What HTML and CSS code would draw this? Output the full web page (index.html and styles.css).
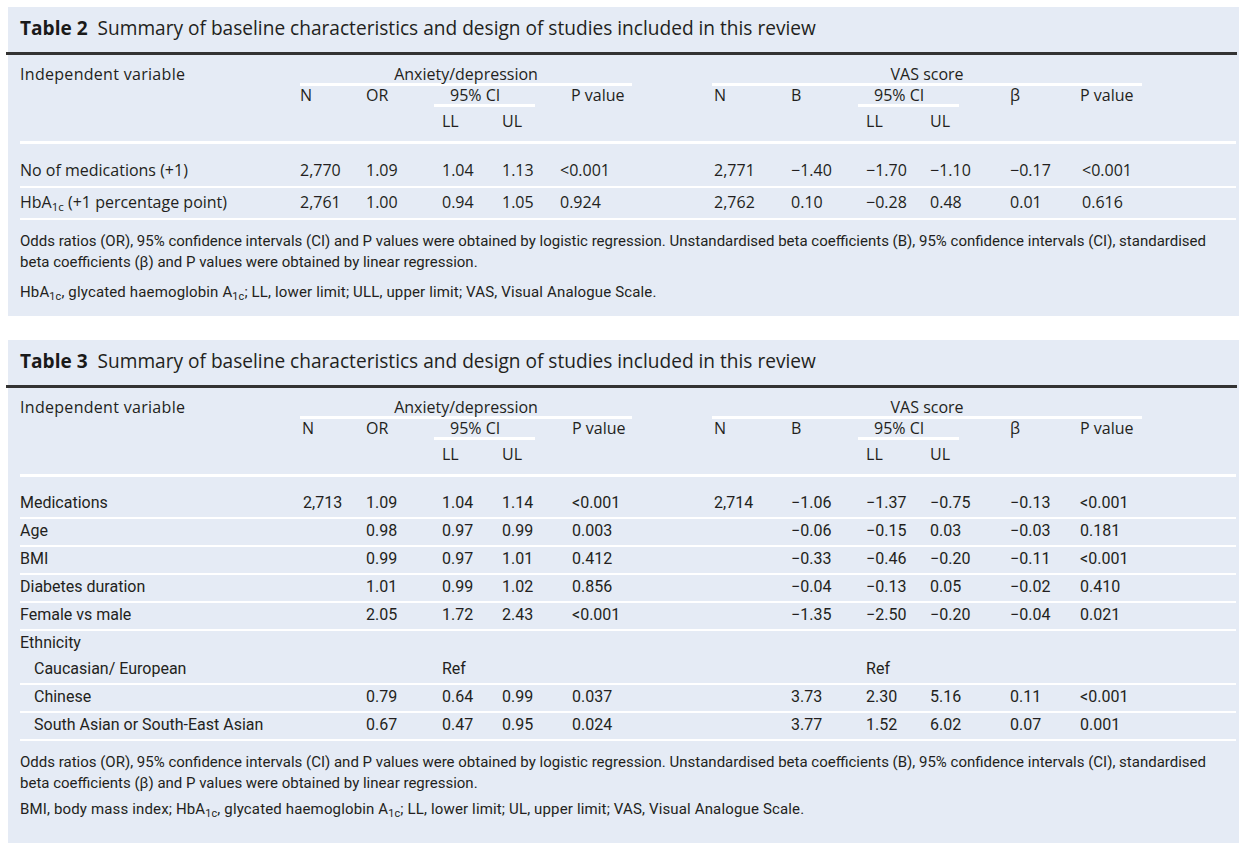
FILE: index.html
```html
<!DOCTYPE html>
<html>
<head>
<meta charset="utf-8">
<link rel="stylesheet" href="styles.css">
</head>
<body>
<div class="panel p2">
  <div class="title"><b>Table 2</b>&nbsp; Summary of baseline characteristics and design of studies included in this review</div>
  <table class="tbl">
    <colgroup>
      <col class="c-lab"><col class="c-n"><col class="c-or"><col class="c-ll"><col class="c-ul"><col class="c-p"><col class="c-sp1">
      <col class="c-vn"><col class="c-b"><col class="c-vll"><col class="c-vul"><col class="c-beta"><col class="c-vp"><col class="c-sp2">
    </colgroup>
    <thead>
      <tr class="hA">
        <th>Independent variable</th>
        <th colspan="5"><div class="grp grp-anx">Anxiety/depression</div></th>
        <th></th>
        <th colspan="6"><div class="grp grp-vas">VAS score</div></th>
        <th></th>
      </tr>
      <tr class="hB">
        <th></th><th>N</th><th>OR</th>
        <th colspan="2"><div class="ci">95% CI</div></th>
        <th class="pv2">P value</th><th></th>
        <th>N</th><th>B</th>
        <th colspan="2"><div class="ci">95% CI</div></th>
        <th>β</th><th>P value</th><th></th>
      </tr>
      <tr class="hC">
        <th></th><th></th><th></th><th>LL</th><th>UL</th><th></th><th></th>
        <th></th><th></th><th>LL</th><th>UL</th><th></th><th></th><th></th>
      </tr>
    </thead>
    <tbody class="b2">
      <tr class="first">
        <td>No of medications (+1)</td><td>2,770</td><td>1.09</td><td>1.04</td><td>1.13</td><td>&lt;0.001</td><td></td>
        <td>2,771</td><td>−1.40</td><td>−1.70</td><td>−1.10</td><td>−0.17</td><td class="vpv">&lt;0.001</td><td></td>
      </tr>
      <tr>
        <td>HbA<sub>1c</sub> (+1 percentage point)</td><td>2,761</td><td>1.00</td><td>0.94</td><td>1.05</td><td>0.924</td><td></td>
        <td>2,762</td><td>0.10</td><td>−0.28</td><td>0.48</td><td>0.01</td><td class="vpv">0.616</td><td></td>
      </tr>
    </tbody>
  </table>
  <div class="notes n2">
    <p>Odds ratios (OR), 95% confidence intervals (CI) and P values were obtained by logistic regression. Unstandardised beta coefficients (B), 95% confidence intervals (CI), standardised beta coefficients (β) and P values were obtained by linear regression.</p>
    <p class="last">HbA<sub>1c</sub>, glycated haemoglobin A<sub>1c</sub>; LL, lower limit; ULL, upper limit; VAS, Visual Analogue Scale.</p>
  </div>
</div>

<div class="panel p3">
  <div class="title"><b>Table 3</b>&nbsp; Summary of baseline characteristics and design of studies included in this review</div>
  <table class="tbl">
    <colgroup>
      <col class="c-lab"><col class="c-n"><col class="c-or"><col class="c-ll"><col class="c-ul"><col class="c-p"><col class="c-sp1">
      <col class="c-vn"><col class="c-b"><col class="c-vll"><col class="c-vul"><col class="c-beta"><col class="c-vp"><col class="c-sp2">
    </colgroup>
    <thead>
      <tr class="hA">
        <th>Independent variable</th>
        <th colspan="5"><div class="grp grp-anx">Anxiety/depression</div></th>
        <th></th>
        <th colspan="6"><div class="grp grp-vas">VAS score</div></th>
        <th></th>
      </tr>
      <tr class="hB">
        <th></th><th class="n3h">N</th><th>OR</th>
        <th colspan="2"><div class="ci">95% CI</div></th>
        <th class="pv3">P value</th><th></th>
        <th>N</th><th>B</th>
        <th colspan="2"><div class="ci">95% CI</div></th>
        <th>β</th><th>P value</th><th></th>
      </tr>
      <tr class="hC">
        <th></th><th></th><th></th><th>LL</th><th>UL</th><th></th><th></th>
        <th></th><th></th><th>LL</th><th>UL</th><th></th><th></th><th></th>
      </tr>
    </thead>
    <tbody class="b3">
      <tr class="first">
        <td>Medications</td><td class="n3v">2,713</td><td>1.09</td><td>1.04</td><td>1.14</td><td class="pv3">&lt;0.001</td><td></td>
        <td>2,714</td><td>−1.06</td><td>−1.37</td><td>−0.75</td><td>−0.13</td><td>&lt;0.001</td><td></td>
      </tr>
      <tr>
        <td>Age</td><td></td><td>0.98</td><td>0.97</td><td>0.99</td><td class="pv3">0.003</td><td></td>
        <td></td><td>−0.06</td><td>−0.15</td><td>0.03</td><td>−0.03</td><td>0.181</td><td></td>
      </tr>
      <tr>
        <td>BMI</td><td></td><td>0.99</td><td>0.97</td><td>1.01</td><td class="pv3">0.412</td><td></td>
        <td></td><td>−0.33</td><td>−0.46</td><td>−0.20</td><td>−0.11</td><td>&lt;0.001</td><td></td>
      </tr>
      <tr>
        <td>Diabetes duration</td><td></td><td>1.01</td><td>0.99</td><td>1.02</td><td class="pv3">0.856</td><td></td>
        <td></td><td>−0.04</td><td>−0.13</td><td>0.05</td><td>−0.02</td><td>0.410</td><td></td>
      </tr>
      <tr>
        <td>Female vs male</td><td></td><td>2.05</td><td>1.72</td><td>2.43</td><td class="pv3">&lt;0.001</td><td></td>
        <td></td><td>−1.35</td><td>−2.50</td><td>−0.20</td><td>−0.04</td><td>0.021</td><td></td>
      </tr>
      <tr class="nob">
        <td>Ethnicity</td><td></td><td></td><td></td><td></td><td></td><td></td>
        <td></td><td></td><td></td><td></td><td></td><td></td><td></td>
      </tr>
      <tr>
        <td class="sub">Caucasian/ European</td><td></td><td></td><td>Ref</td><td></td><td></td><td></td>
        <td></td><td></td><td>Ref</td><td></td><td></td><td></td><td></td>
      </tr>
      <tr>
        <td class="sub">Chinese</td><td></td><td>0.79</td><td>0.64</td><td>0.99</td><td class="pv3">0.037</td><td></td>
        <td></td><td>3.73</td><td>2.30</td><td>5.16</td><td>0.11</td><td>&lt;0.001</td><td></td>
      </tr>
      <tr>
        <td class="sub">South Asian or South-East Asian</td><td></td><td>0.67</td><td>0.47</td><td>0.95</td><td class="pv3">0.024</td><td></td>
        <td></td><td>3.77</td><td>1.52</td><td>6.02</td><td>0.07</td><td>0.001</td><td></td>
      </tr>
    </tbody>
  </table>
  <div class="notes n3">
    <p>Odds ratios (OR), 95% confidence intervals (CI) and P values were obtained by logistic regression. Unstandardised beta coefficients (B), 95% confidence intervals (CI), standardised beta coefficients (β) and P values were obtained by linear regression.</p>
    <p class="last">BMI, body mass index; HbA<sub>1c</sub>, glycated haemoglobin A<sub>1c</sub>; LL, lower limit; UL, upper limit; VAS, Visual Analogue Scale.</p>
  </div>
</div>
</body>
</html>
```
FILE: styles.css
```css
html, body {
  margin: 0;
  padding: 0;
  background: #ffffff;
}
body {
  padding: 7px 0 0 8px;
  font-family: "Open Sans", "Noto Sans", sans-serif;
  color: #231f20;
}
.panel {
  width: 1231px;
  background: #e5ebf5;
}
.p2 { margin-bottom: 24px; }

.title {
  margin: 0 2px 0 -2px;
  padding: 9px 0 12px 14px;
  font-size: 19.1px;
  line-height: 24px;
  border-bottom: 3px solid #333333;
  color: #231f20;
}
.title b { font-weight: 700; color: #1a1a1a; }

.tbl {
  margin-left: 12px;
  width: 1216px;
  table-layout: fixed;
  border-collapse: collapse;
  font-size: 16px;
}
.c-lab { width: 280px; }
.c-n { width: 66px; }
.c-or { width: 76px; }
.c-ll { width: 60px; }
.c-ul { width: 58px; }
.c-p { width: 72px; }
.c-sp1 { width: 82px; }
.c-vn { width: 77px; }
.c-b { width: 75px; }
.c-vll { width: 64px; }
.c-vul { width: 80px; }
.c-beta { width: 70px; }
.c-vp { width: 62px; }
.c-sp2 { width: 94px; }

.tbl th, .tbl td {
  padding: 0;
  text-align: left;
  vertical-align: top;
  white-space: nowrap;
  font-weight: 400;
}
.tbl th { line-height: 18px; }
.hA th:first-child { letter-spacing: 0.3px; }
.hA th { padding-top: 10px; }
.grp {
  text-align: center;
  border-bottom: 3px solid #ffffff;
}
.grp-vas { margin-left: -2px; }
.ci {
  margin-left: -8px;
  width: 85px;
  padding-left: 16px;
  border-bottom: 3px solid #ffffff;
}
.hC th {
  padding-top: 5px;
  padding-bottom: 11px;
  border-bottom: 3px solid #ffffff;
}
.pv2 { padding-left: 11px !important; }
.pv3 { padding-left: 12px !important; }
.n3h { padding-left: 2px !important; }

.tbl td {
  line-height: 20px;
  border-bottom: 2px solid #ffffff;
}
.b2 td {
  padding-top: 4px;
  padding-bottom: 6px;
}
.b2 .first td { padding-top: 16px; }
.vpv { padding-left: 2px !important; }

.b3 td {
  font-family: "Roboto", "Open Sans", sans-serif;
  font-size: 16px;
  padding-top: 2px;
  padding-bottom: 4px;
}
.b3 .first td { padding-top: 16px; }
.b3 .first td.n3v { padding-left: 3px; }
.b3 .nob td { border-bottom: none; }
.b3 td.sub { padding-left: 14px; }

sub {
  font-size: 0.72em;
  line-height: 0;
  vertical-align: -0.3em;
}

.notes {
  padding: 11px 12px 13px 12px;
  font-family: "Roboto", "Open Sans", sans-serif;
  font-size: 15px;
  line-height: 21px;
}
.notes p { margin: 0; }
.notes p + p { margin-top: 9px; }
.notes p.last { letter-spacing: 0.15px; }
.n3 { padding-bottom: 23px; }
.n3 p + p { margin-top: 5px; }
```
